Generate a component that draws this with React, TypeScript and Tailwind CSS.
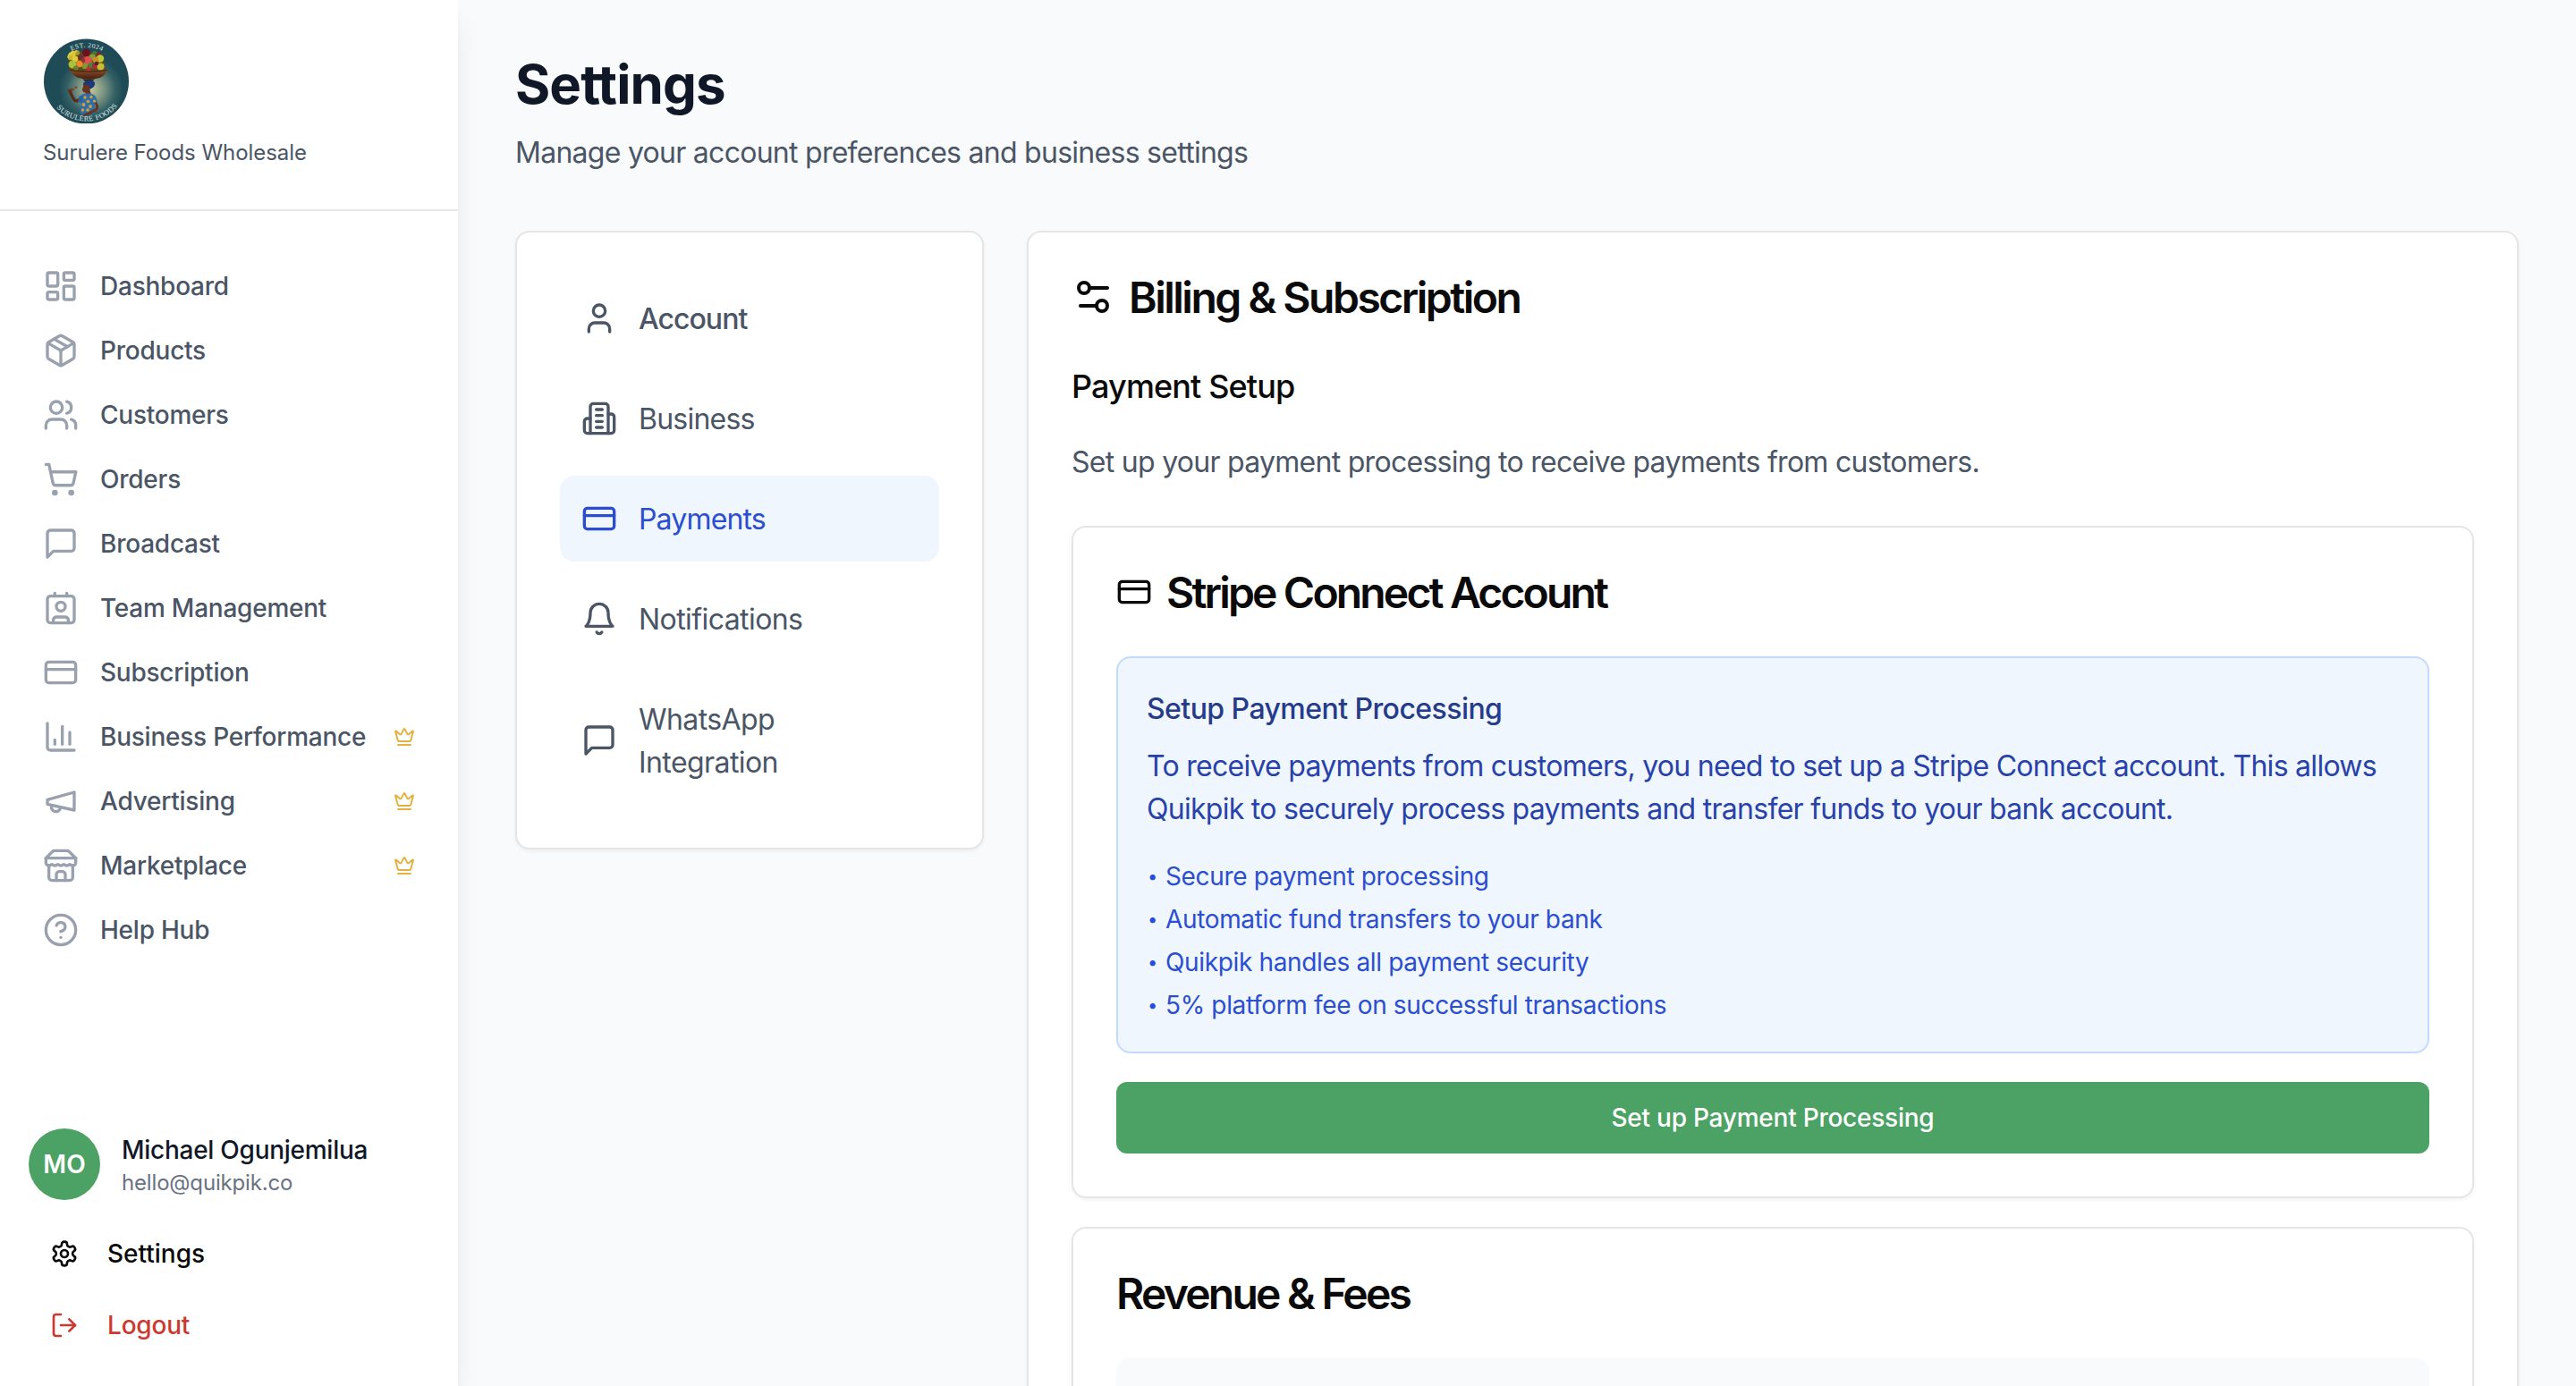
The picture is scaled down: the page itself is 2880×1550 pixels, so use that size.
import type { ReactNode } from "react";

type IconProps = { name: keyof typeof glyphs; className?: string };

/* 24x24 outline glyphs, stroked with the current text colour */
const glyphs = {
  dashboard: (
    <>
      <rect width="7" height="9" x="3" y="3" rx="1" />
      <rect width="7" height="5" x="14" y="3" rx="1" />
      <rect width="7" height="9" x="14" y="12" rx="1" />
      <rect width="7" height="5" x="3" y="16" rx="1" />
    </>
  ),
  box: (
    <>
      <path d="m7.5 4.27 9 5.15" />
      <path d="M21 8a2 2 0 0 0-1-1.73l-7-4a2 2 0 0 0-2 0l-7 4A2 2 0 0 0 3 8v8a2 2 0 0 0 1 1.73l7 4a2 2 0 0 0 2 0l7-4A2 2 0 0 0 21 16Z" />
      <path d="m3.3 7 8.7 5 8.7-5" />
      <path d="M12 22V12" />
    </>
  ),
  users: (
    <>
      <path d="M16 21v-2a4 4 0 0 0-4-4H6a4 4 0 0 0-4 4v2" />
      <circle cx="9" cy="7" r="4" />
      <path d="M22 21v-2a4 4 0 0 0-3-3.87" />
      <path d="M16 3.13a4 4 0 0 1 0 7.75" />
    </>
  ),
  cart: (
    <>
      <circle cx="8" cy="21" r="1" />
      <circle cx="19" cy="21" r="1" />
      <path d="M2.05 2.05h2l2.66 12.42a2 2 0 0 0 2 1.58h9.78a2 2 0 0 0 1.95-1.57l1.65-7.43H5.12" />
    </>
  ),
  message: <path d="M21 15a2 2 0 0 1-2 2H7l-4 4V5a2 2 0 0 1 2-2h14a2 2 0 0 1 2 2z" />,
  contact: (
    <>
      <path d="M16 2v2" />
      <path d="M7 22v-2a2 2 0 0 1 2-2h6a2 2 0 0 1 2 2v2" />
      <path d="M8 2v2" />
      <circle cx="12" cy="11" r="3" />
      <rect x="3" y="4" width="18" height="18" rx="2" />
    </>
  ),
  card: (
    <>
      <rect width="20" height="14" x="2" y="5" rx="2" />
      <line x1="2" x2="22" y1="10" y2="10" />
    </>
  ),
  chart: (
    <>
      <path d="M3 3v16a2 2 0 0 0 2 2h16" />
      <path d="M18 17V9" />
      <path d="M13 17V5" />
      <path d="M8 17v-3" />
    </>
  ),
  megaphone: (
    <>
      <path d="m3 11 18-5v12L3 14v-3z" />
      <path d="M11.6 16.8a3 3 0 1 1-5.8-1.6" />
    </>
  ),
  store: (
    <>
      <path d="m2 7 4.41-4.41A2 2 0 0 1 7.83 2h8.34a2 2 0 0 1 1.42.59L22 7" />
      <path d="M4 12v8a2 2 0 0 0 2 2h12a2 2 0 0 0 2-2v-8" />
      <path d="M15 22v-4a2 2 0 0 0-2-2h-2a2 2 0 0 0-2 2v4" />
      <path d="M2 7h20" />
      <path d="M22 7v3a2 2 0 0 1-2 2a2.7 2.7 0 0 1-1.59-.63.7.7 0 0 0-.82 0A2.7 2.7 0 0 1 16 12a2.7 2.7 0 0 1-1.59-.63.7.7 0 0 0-.82 0A2.7 2.7 0 0 1 12 12a2.7 2.7 0 0 1-1.59-.63.7.7 0 0 0-.82 0A2.7 2.7 0 0 1 8 12a2.7 2.7 0 0 1-1.59-.63.7.7 0 0 0-.82 0A2.7 2.7 0 0 1 4 12a2 2 0 0 1-2-2V7" />
    </>
  ),
  help: (
    <>
      <circle cx="12" cy="12" r="10" />
      <path d="M9.09 9a3 3 0 0 1 5.83 1c0 2-3 3-3 3" />
      <path d="M12 17h.01" />
    </>
  ),
  crown: (
    <>
      <path d="M11.562 3.266a.5.5 0 0 1 .876 0L15.39 8.87a1 1 0 0 0 1.516.294L21.183 5.5a.5.5 0 0 1 .798.519l-2.834 10.246a1 1 0 0 1-.956.734H5.81a1 1 0 0 1-.957-.734L2.02 6.02a.5.5 0 0 1 .798-.519l4.276 3.664a1 1 0 0 0 1.516-.294z" />
      <path d="M5 21h14" />
    </>
  ),
  gear: (
    <>
      <path d="M12.22 2h-.44a2 2 0 0 0-2 2v.18a2 2 0 0 1-1 1.73l-.43.25a2 2 0 0 1-2 0l-.15-.08a2 2 0 0 0-2.73.73l-.22.38a2 2 0 0 0 .73 2.73l.15.1a2 2 0 0 1 1 1.72v.51a2 2 0 0 1-1 1.74l-.15.09a2 2 0 0 0-.73 2.73l.22.38a2 2 0 0 0 2.73.73l.15-.08a2 2 0 0 1 2 0l.43.25a2 2 0 0 1 1 1.73V20a2 2 0 0 0 2 2h.44a2 2 0 0 0 2-2v-.18a2 2 0 0 1 1-1.73l.43-.25a2 2 0 0 1 2 0l.15.08a2 2 0 0 0 2.73-.73l.22-.39a2 2 0 0 0-.73-2.73l-.15-.08a2 2 0 0 1-1-1.74v-.5a2 2 0 0 1 1-1.74l.15-.09a2 2 0 0 0 .73-2.73l-.22-.38a2 2 0 0 0-2.73-.73l-.15.08a2 2 0 0 1-2 0l-.43-.25a2 2 0 0 1-1-1.73V4a2 2 0 0 0-2-2z" />
      <circle cx="12" cy="12" r="3" />
    </>
  ),
  logout: (
    <>
      <path d="M9 21H5a2 2 0 0 1-2-2V5a2 2 0 0 1 2-2h4" />
      <polyline points="16 17 21 12 16 7" />
      <line x1="21" x2="9" y1="12" y2="12" />
    </>
  ),
  user: (
    <>
      <path d="M19 21v-2a4 4 0 0 0-4-4H9a4 4 0 0 0-4 4v2" />
      <circle cx="12" cy="7" r="4" />
    </>
  ),
  building: (
    <>
      <path d="M6 22V4a2 2 0 0 1 2-2h8a2 2 0 0 1 2 2v18Z" />
      <path d="M6 12H4a2 2 0 0 0-2 2v6a2 2 0 0 0 2 2h2" />
      <path d="M18 9h2a2 2 0 0 1 2 2v9a2 2 0 0 1-2 2h-2" />
      <path d="M10 6h4M10 10h4M10 14h4M10 18h4" />
    </>
  ),
  bell: (
    <>
      <path d="M6 8a6 6 0 0 1 12 0c0 7 3 9 3 9H3s3-2 3-9" />
      <path d="M10.3 21a1.94 1.94 0 0 0 3.4 0" />
    </>
  ),
  sliders: (
    <>
      <path d="M20 7h-9" />
      <path d="M14 17H5" />
      <circle cx="17" cy="17" r="3" />
      <circle cx="7" cy="7" r="3" />
    </>
  ),
};

function Icon({ name, className = "size-10" }: IconProps) {
  return (
    <svg
      viewBox="0 0 24 24"
      fill="none"
      stroke="currentColor"
      strokeWidth="2"
      strokeLinecap="round"
      strokeLinejoin="round"
      className={`shrink-0 ${className}`}
    >
      {glyphs[name]}
    </svg>
  );
}

const fruits: [number, number, number, string][] = [
  [31, 21, 3.2, "#c3b72c"], [34, 17, 3.2, "#d8c22e"], [38, 16, 3, "#a99a2c"], [58, 17, 3, "#3f7a35"],
  [62, 18.5, 3, "#8f1f2e"], [55, 21, 3.4, "#7ba23a"], [36, 23, 3.4, "#e0c93a"], [42, 21, 3, "#6e2f28"],
  [48.5, 16, 4.4, "#6d1120"], [64, 22.5, 4.2, "#b9c934"], [59, 24, 3.4, "#c98f2c"], [33, 29, 4.4, "#a8c23c"],
  [50, 25, 5, "#df4f50"], [41, 28.5, 3.8, "#ee8a2c"], [47, 31, 3.2, "#7d9c33"], [54, 30, 3.2, "#3f8a3c"],
  [58, 31, 3.2, "#a62b33"], [64.5, 31.5, 4, "#c5bd35"], [37, 33, 2.8, "#6b7f2c"], [51, 34, 2.6, "#c02f38"],
  [45, 24.5, 2.4, "#93303c"], [60, 28, 2.2, "#5f1b24"],
];

function BrandLogo() {
  return (
    <svg viewBox="0 0 96 95" className="block h-[95px] w-[96px]">
      <defs>
        <radialGradient id="glow" cx="54" cy="57" r="36" gradientUnits="userSpaceOnUse">
          <stop offset="0" stopColor="#c0c49c" />
          <stop offset="0.4" stopColor="#7a9482" />
          <stop offset="0.75" stopColor="#336064" />
          <stop offset="1" stopColor="#1f4b57" />
        </radialGradient>
        <linearGradient id="bowl" x1="0" y1="0" x2="0" y2="1">
          <stop offset="0" stopColor="#8a4d28" />
          <stop offset="1" stopColor="#3e1e10" />
        </linearGradient>
        <path id="arc-top" d="M10.500 48a38 38 0 0 1 76 0" />
        <path id="arc-bottom" d="M4 48a44.500 44.500 0 0 0 89 0" />
      </defs>
      <circle cx="48.500" cy="48" r="47.500" fill="url(#glow)" />
      <text fill="#dfe8e4" fontFamily="Liberation Serif, serif" fontSize="7.6" letterSpacing="0.4">
        <textPath href="#arc-top" startOffset="50.5%" textAnchor="middle">EST. 2024</textPath>
      </text>
      <text fill="#dfe8e4" fontFamily="Liberation Serif, serif" fontSize="8.4" letterSpacing="0.35">
        <textPath href="#arc-bottom" startOffset="51%" textAnchor="middle">SURULERE FOODS</textPath>
      </text>
      <path d="M29 36l-1-14 5-6 4 2 4-3 8 1 8-1 6 2 5 4 2 15q-20 3-41 0z" fill="#5d4a1e" />
      {fruits.map(([x, y, r, c], i) => (
        <circle key={i} cx={x} cy={y} r={r} fill={c} />
      ))}
      <path d="M28 21q1-4 3-5M31 18q1-3 3-3.500M35 19q0-4 2.500-5" fill="none" stroke="#e2cf3a" strokeWidth="1.600" strokeLinecap="round" />
      <path d="M30 35.500q21 3 42.500 0q-3 6-9 8.500q-12 3.500-24 0q-7-3-9.500-8.500z" fill="url(#bowl)" />
      <path d="M30 35.500q21 3 42.500 0" fill="none" stroke="#4a2413" strokeWidth="1.200" />
      <path d="M44 45.500h14l-3 2.500h-8z" fill="#3a2418" />
      <path d="M45 50q3-3.500 8-3.300q6 .8 5 4.800q-1 4-5.500 5q-4-3.500-7.500-4.500z" fill="#1b3a78" />
      <path d="M45.500 51.500q4 0 7.500 3.500l-.5 3 1.500 5.500-6 1-.5-4q-2.800.2-2.800-1.500l-1-1.800.8-1.700z" fill="#6b3220" />
      <path d="M43 66q-4 5-7 3.500q-3-3-5.500-10" fill="none" stroke="#5c2819" strokeWidth="3.200" strokeLinecap="round" />
      <path d="M28.500 58.500l5-1.500" stroke="#6b3220" strokeWidth="2.400" strokeLinecap="round" />
      <path d="M33 57l3.500-2" stroke="#8a5a34" strokeWidth="1.200" strokeLinecap="round" />
      <ellipse cx="37" cy="54.600" rx="1.700" ry="1.200" fill="#7a4a2a" />
      <path d="M43 63q6-2.500 13-.5q4 2 5 9l-3 2v10q-8 3-15 1.500q-3-4-.5-9.500q2-6 .5-12.500z" fill="#2f6fa8" />
      <path d="M41 64q-1.500 3-2 7l5 1.500 1-8z" fill="#2a639a" />
      <path d="M59.500 73q2.500 4 0 6.500q-5 3.500-13 6" fill="none" stroke="#6b3220" strokeWidth="2.800" strokeLinecap="round" />
      <g fill="#dc9c38">
        <circle cx="47" cy="66" r="1.700" />
        <circle cx="54" cy="65.500" r="1.700" />
        <circle cx="50.500" cy="70.500" r="1.800" />
        <circle cx="57.500" cy="70" r="1.600" />
        <circle cx="45.500" cy="74" r="1.900" />
        <circle cx="53" cy="76" r="1.900" />
        <circle cx="44.500" cy="80" r="1.700" />
        <circle cx="50" cy="80" r="1.700" />
      </g>
    </svg>
  );
}

const nav: { label: string; icon: IconProps["name"]; premium?: boolean }[] = [
  { label: "Dashboard", icon: "dashboard" },
  { label: "Products", icon: "box" },
  { label: "Customers", icon: "users" },
  { label: "Orders", icon: "cart" },
  { label: "Broadcast", icon: "message" },
  { label: "Team Management", icon: "contact" },
  { label: "Subscription", icon: "card" },
  { label: "Business Performance", icon: "chart", premium: true },
  { label: "Advertising", icon: "megaphone", premium: true },
  { label: "Marketplace", icon: "store", premium: true },
  { label: "Help Hub", icon: "help" },
];

function Sidebar() {
  return (
    <aside className="relative z-10 flex h-full w-[512px] shrink-0 flex-col bg-white shadow-[0_20px_30px_-6px_rgb(0_0_0/0.1),0_8px_12px_-8px_rgb(0_0_0/0.1)]">
      <div className="h-[236px] border-b-2 border-gray-200 px-12 pt-[43px]">
        <BrandLogo />
        <p className="mt-[17px] text-2xl leading-8 tracking-[-0.002em] text-gray-600">Surulere Foods Wholesale</p>
      </div>

      <nav className="flex flex-1 flex-col gap-4 px-12 pt-14">
        {nav.map(({ label, icon, premium }) => (
          <a key={label} className="flex h-14 items-center gap-6 text-[28px] leading-10 font-medium tracking-[-0.0085em] text-gray-600">
            <span className="text-gray-400">
              <Icon name={icon} />
            </span>
            <span className="flex-1 whitespace-nowrap">{label}</span>
            {premium && <Icon name="crown" className="size-6 text-[#e3b341]" />}
          </a>
        ))}
      </nav>

      <div className="px-8 pb-7">
        <div className="mb-5 flex items-center gap-6">
          <div className="flex size-20 items-center justify-center rounded-full bg-[#4ca264] text-[28px] font-semibold text-white">
            MO
          </div>
          <div>
            <p className="text-[28px] leading-10 font-medium tracking-[-0.0095em] text-gray-900">Michael Ogunjemilua</p>
            <p className="translate-y-px text-2xl leading-8 tracking-[-0.007em] text-gray-500">hello@quikpik.co</p>
          </div>
        </div>
        <a className="flex h-20 items-center gap-8 px-6 text-[28px] font-medium text-neutral-950">
          <Icon name="gear" className="size-8" />
          Settings
        </a>
        <a className="flex h-20 items-center gap-8 px-6 text-[28px] font-medium tracking-[-0.007em] text-[#cb3a31]">
          <Icon name="logout" className="size-8" />
          Logout
        </a>
      </div>
    </aside>
  );
}

const tabs: { label: string; icon: IconProps["name"]; style: string }[] = [
  { label: "Account", icon: "user", style: "font-medium tracking-[-0.030em] text-gray-600" },
  { label: "Business", icon: "building", style: "tracking-[-0.024em] text-gray-600" },
  { label: "Payments", icon: "card", style: "bg-[#eff6fe] tracking-[-0.026em] text-[#2b4ed0]" },
  { label: "Notifications", icon: "bell", style: "tracking-[-0.018em] text-gray-600" },
  { label: "WhatsApp Integration", icon: "message", style: "tracking-[-0.018em] text-gray-600" },
];

function Card({ className = "", children }: { className?: string; children: ReactNode }) {
  return (
    <section className={`rounded-2xl border-2 border-neutral-200 bg-white p-12 shadow-[0_2px_4px_rgb(0_0_0/0.05)] ${className}`}>
      {children}
    </section>
  );
}

const benefits = [
  "Secure payment processing",
  "Automatic fund transfers to your bank",
  "Quikpik handles all payment security",
  "5% platform fee on successful transactions",
];

export default function App() {
  return (
    <div className="flex h-[1550px] w-[2880px] overflow-hidden bg-[#f9fafc] font-[Inter,'Liberation_Sans',sans-serif] text-neutral-950">
      <Sidebar />
      <main className="flex flex-1 flex-col px-16 pt-[58px]">
        <h1 className="text-6xl leading-[72px] font-bold tracking-[-0.0155em] text-gray-900">Settings</h1>
        <p className="mt-4 translate-y-px text-[32px] leading-[48px] tracking-[-0.0227em] text-gray-600">
          Manage your account preferences and business settings
        </p>

        <div className="mt-16 grid grid-cols-4 items-start gap-12">
          <Card>
            <div className="flex flex-col gap-4">
              {tabs.map(({ label, icon, style }) => (
                <a key={label} className={`flex items-center gap-6 rounded-2xl p-6 text-[32px] leading-[48px] ${style}`}>
                  <Icon name={icon} />
                  <span className="translate-y-px">{label}</span>
                </a>
              ))}
            </div>
          </Card>

          <Card className="col-span-3">
            <h2 className="flex items-center gap-4 text-5xl leading-[48px] font-semibold tracking-[-0.052em]">
              <Icon name="sliders" className="size-12" />
              <span className="translate-y-px">Billing &amp; Subscription</span>
            </h2>
            <h3 className="mt-12 text-4xl leading-[56px] font-medium tracking-[-0.0242em]">Payment Setup</h3>
            <p className="mt-8 translate-y-px text-[32px] leading-[48px] tracking-[-0.0225em] text-gray-600">
              Set up your payment processing to receive payments from customers.
            </p>

            <Card className="mt-12">
              <h2 className="flex items-center gap-4 text-5xl leading-[48px] font-semibold tracking-[-0.059em]">
                <Icon name="card" />
                <span className="translate-y-px">Stripe Connect Account</span>
              </h2>
              <div className="mt-12 rounded-2xl border-2 border-[#c2dafb] bg-[#eff6fe] p-8">
                <h4 className="translate-y-px text-[32px] leading-[48px] font-medium tracking-[-0.0175em] text-[#263b89]">
                  Setup Payment Processing
                </h4>
                <p className="mt-4 translate-y-px text-[32px] leading-[48px] tracking-[-0.0225em] text-[#2842a9]">
                  To receive payments from customers, you need to set up a Stripe Connect account. This allows
                  <br />
                  Quikpik to securely process payments and transfer funds to your bank account.
                </p>
                <ul className="mt-8 flex flex-col gap-2 text-[28px] leading-10 tracking-[-0.0125em] text-[#2b4ed0]">
                  {benefits.map((b) => (
                    <li key={b} className="flex">
                      <span className="w-[21px] pl-px text-xl leading-10">•</span>
                      {b}
                    </li>
                  ))}
                </ul>
              </div>
              <button className="mt-8 block h-20 w-full rounded-xl bg-[#4ca264] text-[28px] font-medium tracking-[-0.0085em] text-white">
                Set up Payment Processing
              </button>
            </Card>

            <Card className="mt-8">
              <h2 className="translate-y-px text-5xl leading-[48px] font-semibold tracking-[-0.0575em]">Revenue &amp; Fees</h2>
              <div className="mt-12 h-48 rounded-2xl bg-[#f9fafc]" />
            </Card>
          </Card>
        </div>
      </main>
    </div>
  );
}
